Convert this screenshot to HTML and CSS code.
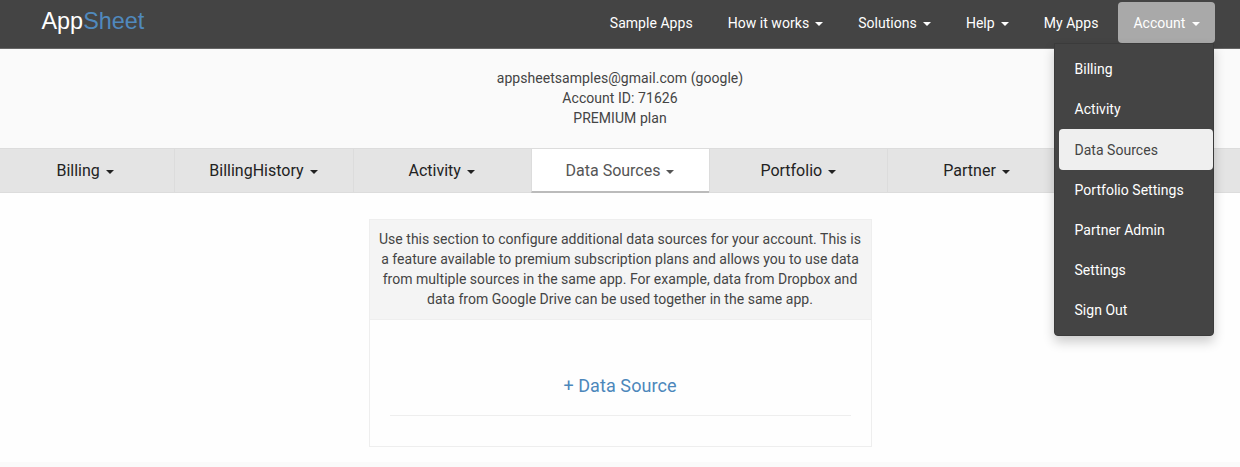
FILE: index.html
```html
<!DOCTYPE html>
<html lang="en">
<head>
<meta charset="utf-8">
<title>AppSheet - Account</title>
<link rel="stylesheet" href="styles.css">
</head>
<body>
<header class="navbar">
  <a class="brand">App<span class="brand-accent">Sheet</span></a>
  <nav class="nav">
    <a class="nav-item">Sample Apps</a>
    <a class="nav-item">How it works<span class="caret"></span></a>
    <a class="nav-item">Solutions<span class="caret"></span></a>
    <a class="nav-item">Help<span class="caret"></span></a>
    <a class="nav-item">My Apps</a>
    <div class="dropdown">
      <a class="nav-item nav-item-open">Account<span class="caret"></span></a>
      <div class="menu">
        <a class="menu-item">Billing</a>
        <a class="menu-item">Activity</a>
        <a class="menu-item menu-item-active">Data Sources</a>
        <a class="menu-item">Portfolio Settings</a>
        <a class="menu-item">Partner Admin</a>
        <a class="menu-item">Settings</a>
        <a class="menu-item">Sign Out</a>
      </div>
    </div>
  </nav>
</header>
<section class="account">
  <div>appsheetsamples@gmail.com (google)</div>
  <div>Account ID: 71626</div>
  <div>PREMIUM plan</div>
</section>
<div class="tabs">
  <a class="tab">Billing<span class="caret"></span></a>
  <a class="tab">BillingHistory<span class="caret"></span></a>
  <a class="tab">Activity<span class="caret"></span></a>
  <a class="tab tab-active">Data Sources<span class="caret"></span></a>
  <a class="tab">Portfolio<span class="caret"></span></a>
  <a class="tab">Partner<span class="caret"></span></a>
  <a class="tab"></a>
</div>
<main class="content">
  <div class="panel">
    <div class="panel-heading">
      <div>Use this section to configure additional data sources for your account. This is</div>
      <div>a feature available to premium subscription plans and allows you to use data</div>
      <div>from multiple sources in the same app. For example, data from Dropbox and</div>
      <div>data from Google Drive can be used together in the same app.</div>
    </div>
    <div class="panel-body">
      <a class="add-source">+ Data Source</a>
    </div>
  </div>
</main>
</body>
</html>
```
FILE: styles.css
```css
* { box-sizing: border-box; }
body {
  margin: 0;
  height: 467px;
  overflow: hidden;
  background: #fafafa;
  color: #444;
  font: 14px/20px Roboto, sans-serif;
}
.caret {
  display: inline-block;
  margin-left: 6px;
  vertical-align: middle;
  border-top: 4px solid;
  border-left: 4px solid transparent;
  border-right: 4px solid transparent;
}
.navbar {
  display: flex;
  justify-content: space-between;
  height: 49px;
  padding: 2px 25.5px 0 41.5px;
  background: #444;
  border-bottom: 1px solid #666;
}
.brand {
  padding-top: 4px;
  color: #fff;
  font: 23.4px/30px "Liberation Sans", sans-serif;
}
.brand-accent { color: #5089bd; }
.nav { display: flex; gap: 5px; }
.nav-item {
  display: block;
  height: 41px;
  padding: 11px 15px 0;
  color: #fff;
  letter-spacing: 0.04px;
  white-space: nowrap;
}
.nav-item-open { background: #a9a9a9; border-radius: 4px; }
.dropdown { position: relative; }
.menu {
  position: absolute;
  top: 41px;
  right: 0.5px;
  z-index: 2;
  width: 160px;
  height: 292.5px;
  padding: 5px 0 0 4px;
  background: #444;
  border: 1px solid #3b3b3b;
  border-radius: 0 0 4px 4px;
  box-shadow: 0 6px 12px rgba(0, 0, 0, 0.2);
}
.menu-item {
  display: block;
  height: 40.2px;
  padding: 10.3px 0 0 15.5px;
  color: #fff;
  letter-spacing: 0.03px;
}
.menu-item-active { background: #efefef; border-radius: 4px; color: #444; }
.account {
  height: 99px;
  padding-top: 19px;
  text-align: center;
  line-height: 20.1px;
  letter-spacing: 0.05px;
}
.tabs {
  display: grid;
  grid-template-columns: repeat(7, 1fr);
  height: 45px;
  margin: 0 -4px;
}
.tab {
  height: 45px;
  padding: 12px 1px 0 0;
  background: #e4e4e4;
  border: solid #dcdcdc;
  border-width: 1px 0 1px 1px;
  color: #222;
  font-size: 16px;
  text-align: center;
}
.tab-active {
  background: #fff;
  border-bottom: 2px solid #bbb;
  color: #555;
}
.content {
  display: flex;
  justify-content: center;
  height: 269px;
  padding-top: 26px;
  background: #fefefe;
}
.panel { width: 503px; height: 228px; border: 1px solid #eee; }
.panel-heading {
  height: 100px;
  padding-top: 9px;
  background: #f4f4f4;
  border-bottom: 1px solid #eee;
  line-height: 20.1px;
  letter-spacing: 0.03px;
  text-align: center;
  white-space: nowrap;
}
.panel-body {
  height: 96px;
  margin: 0 20px;
  padding-top: 55px;
  border-bottom: 1px solid #eee;
  text-align: center;
}
.add-source { color: #4c87bb; font-size: 18px; line-height: 22px; letter-spacing: 0.08px; }
```
